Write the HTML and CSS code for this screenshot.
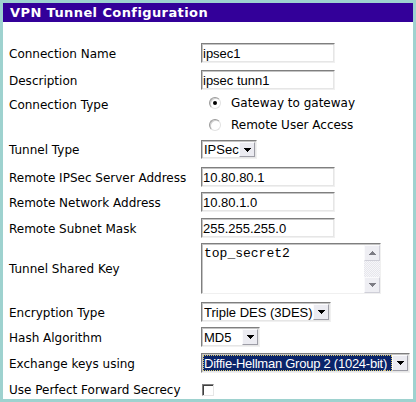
FILE: index.html
```html
<!DOCTYPE html>
<html>
<head>
<meta charset="utf-8">
<link rel="stylesheet" href="styles.css">
</head>
<body>
<div class="panel">
  <div class="title">VPN Tunnel Configuration</div>
  <form class="form">
    <div class="row first"><span class="lbl">Connection Name</span><input class="txt" type="text" value="ipsec1"></div>
    <div class="row mt7"><span class="lbl">Description</span><input class="txt" type="text" value="ipsec tunn1"></div>
    <div class="row mt4 h18"><span class="lbl low">Connection Type</span><label class="opt"><input class="radio" type="radio" name="ct" checked><span>Gateway to gateway</span></label></div>
    <div class="row mt4 h18"><span class="lbl"></span><label class="opt"><input class="radio" type="radio" name="ct"><span>Remote User Access</span></label></div>
    <div class="row mt6 h19"><span class="lbl">Tunnel Type</span>
      <span class="sel w-tunnel"><select class="sel-in"><option>IPSec</option></select><span class="sel-btn"><svg width="7" height="4" viewBox="0 0 7 4" shape-rendering="crispEdges"><path d="M0 0h7v1h-1v1h-1v1h-1v1h-1v-1h-1v-1h-1v-1h-1z" fill="#000"/></svg></span></span>
    </div>
    <div class="row mt8"><span class="lbl">Remote IPSec Server Address</span><input class="txt" type="text" value="10.80.80.1"></div>
    <div class="row mt5"><span class="lbl">Remote Network Address</span><input class="txt" type="text" value="10.80.1.0"></div>
    <div class="row mt6"><span class="lbl">Remote Subnet Mask</span><input class="txt" type="text" value="255.255.255.0"></div>
    <div class="row mt5 tall"><span class="lbl">Tunnel Shared Key</span>
      <span class="ta"><textarea class="ta-in">top_secret2</textarea><span class="sb"><span class="sb-btn"><svg width="7" height="4" viewBox="0 0 7 4" shape-rendering="crispEdges"><path d="M3 0h1v1h1v1h1v1h1v1h-7v-1h1v-1h1v-1h1z" fill="#7c7c84"/></svg></span><span class="sb-track"></span><span class="sb-btn"><svg width="7" height="4" viewBox="0 0 7 4" shape-rendering="crispEdges"><path d="M0 0h7v1h-1v1h-1v1h-1v1h-1v-1h-1v-1h-1v-1h-1z" fill="#7c7c84"/></svg></span></span></span>
    </div>
    <div class="row mt8"><span class="lbl">Encryption Type</span>
      <span class="sel w-enc"><select class="sel-in"><option>Triple DES (3DES)</option></select><span class="sel-btn"><svg width="7" height="4" viewBox="0 0 7 4" shape-rendering="crispEdges"><path d="M0 0h7v1h-1v1h-1v1h-1v1h-1v-1h-1v-1h-1v-1h-1z" fill="#000"/></svg></span></span>
    </div>
    <div class="row mt5"><span class="lbl">Hash Algorithm</span>
      <span class="sel w-hash"><select class="sel-in"><option>MD5</option></select><span class="sel-btn"><svg width="7" height="4" viewBox="0 0 7 4" shape-rendering="crispEdges"><path d="M0 0h7v1h-1v1h-1v1h-1v1h-1v-1h-1v-1h-1v-1h-1z" fill="#000"/></svg></span></span>
    </div>
    <div class="row mt6"><span class="lbl">Exchange keys using</span>
      <span class="sel w-dh"><select class="sel-in focused"><option>Diffie-Hellman Group 2 (1024-bit)</option></select><span class="sel-btn"><svg width="7" height="4" viewBox="0 0 7 4" shape-rendering="crispEdges"><path d="M0 0h7v1h-1v1h-1v1h-1v1h-1v-1h-1v-1h-1v-1h-1z" fill="#000"/></svg></span></span>
    </div>
    <div class="row mt9 h12"><span class="lbl">Use Perfect Forward Secrecy</span><input class="chk" type="checkbox"></div>
  </form>
</div>
</body>
</html>
```

FILE: styles.css
```css
html, body {
  margin: 0;
}
body {
  background: #9ed2cf;
  padding: 3px;
  font-family: "DejaVu Sans", Verdana, sans-serif;
  font-size: 12px;
  color: #000;
}
.panel {
  background: #fff;
  width: 410px;
  height: 396px;
}
.title {
  height: 19px;
  background: #330099;
  color: #fff;
  font-weight: bold;
  font-size: 13px;
  letter-spacing: 0.4px;
  line-height: 20px;
  padding-left: 7px;
  white-space: nowrap;
}
.form {
  margin: 0;
  padding-left: 6px;
  display: flex;
  flex-direction: column;
}
.row {
  display: grid;
  grid-template-columns: 192px auto;
  align-items: center;
  justify-items: start;
  height: 20px;
  margin-top: 5px;
}
.first { margin-top: 21px; }
.mt4 { margin-top: 4px; }
.mt5 { margin-top: 5px; }
.mt6 { margin-top: 6px; }
.mt7 { margin-top: 7px; }
.mt8 { margin-top: 8px; }
.mt9 { margin-top: 9px; }
.h18 { height: 18px; }
.h19 { height: 19px; }
.h12 { height: 12px; }
.tall { height: 51px; }

.lbl {
  white-space: nowrap;
  line-height: 14px;
  padding-top: 1px;
}
.lbl.low { padding-top: 4px; }

.txt {
  box-sizing: border-box;
  width: 134px;
  height: 20px;
  margin: 0;
  padding: 0 1px;
  border: 1px solid;
  border-color: #7f7f7f #f0f0f0 #f0f0f0 #7f7f7f;
  box-shadow: inset 1px 1px 0 #c4c4c4, inset -1px -1px 0 #e6e6e6;
  font-family: "Liberation Sans", Arial, sans-serif;
  font-size: 13px;
  color: #000;
  background: #fff;
  outline: none;
}

.opt {
  display: flex;
  align-items: center;
  margin-left: 8px;
  gap: 10px;
  white-space: nowrap;
}
.radio {
  appearance: none;
  -webkit-appearance: none;
  margin: 0;
  width: 12px;
  height: 12px;
  border-radius: 50%;
  box-sizing: border-box;
  border: 1px solid;
  border-color: #9a9a9a #e2e2e2 #e2e2e2 #9a9a9a;
  background: #fff;
  box-shadow: inset 1px 1px 0 #cfcfcf;
  display: grid;
  place-items: center;
}
.radio:checked::after {
  content: "";
  width: 4px;
  height: 4px;
  border-radius: 50%;
  background: #000;
}

.sel {
  display: inline-flex;
  align-items: center;
  box-sizing: border-box;
  height: 20px;
  border: 1px solid;
  border-color: #7f7f7f #f0f0f0 #f0f0f0 #7f7f7f;
  box-shadow: inset 1px 1px 0 #c4c4c4, inset -1px -1px 0 #e6e6e6;
  background: #fff;
  padding: 1px;
}
.h19 .sel { height: 19px; }
.w-tunnel { width: 56px; }
.w-enc { width: 130px; }
.w-hash { width: 59px; }
.w-dh { width: 209px; }
.sel-in {
  appearance: none;
  -webkit-appearance: none;
  flex: 1;
  min-width: 0;
  height: 100%;
  margin: 0;
  border: 0;
  padding: 0 0 0 1px;
  font-family: "Liberation Sans", Arial, sans-serif;
  font-size: 13px;
  color: #000;
  background: transparent;
  outline: none;
}
.sel-in.focused {
  background: #0a246a;
  color: #fff;
  letter-spacing: -0.25px;
  outline: 1px dotted #d9c86a;
  outline-offset: -1px;
}
.sel-btn {
  box-sizing: border-box;
  width: 16px;
  height: 16px;
  flex: none;
  display: grid;
  place-items: center;
  background: #ebebf1;
  border: 1px solid;
  border-color: #fbfbfd #9d9da6 #9d9da6 #fbfbfd;
}
.h19 .sel-btn { height: 15px; }

.ta {
  display: flex;
  box-sizing: border-box;
  width: 180px;
  height: 51px;
  border: 1px solid;
  border-color: #7f7f7f #f0f0f0 #f0f0f0 #7f7f7f;
  box-shadow: inset 1px 1px 0 #c4c4c4;
  background: #fff;
}
.ta-in {
  flex: 1;
  min-width: 0;
  margin: 0;
  border: 0;
  padding: 2px 1px 0 2px;
  resize: none;
  overflow: hidden;
  font-family: "Liberation Mono", "Courier New", monospace;
  font-size: 13px;
  line-height: 15px;
  color: #000;
  background: transparent;
  outline: none;
}
.sb {
  width: 16px;
  display: flex;
  flex-direction: column;
  padding-top: 1px;
}
.sb-btn {
  box-sizing: border-box;
  width: 16px;
  height: 16px;
  flex: none;
  display: grid;
  place-items: center;
  background: #eeeef3;
  border: 1px solid;
  border-color: #fafafc #cfcfd8 #cfcfd8 #fafafc;
}
.sb-track {
  flex: 1;
  background: repeating-conic-gradient(#f6f6f9 0 25%, #e6e6ec 0 50%) 0 0 / 2px 2px;
}

.chk {
  appearance: none;
  -webkit-appearance: none;
  margin: 0 0 0 1px;
  width: 12px;
  height: 12px;
  box-sizing: border-box;
  border: 1px solid;
  border-color: #7f7f7f #e6e6e6 #e6e6e6 #7f7f7f;
  box-shadow: inset 1px 1px 0 #404040;
  background: #fff;
}
```
